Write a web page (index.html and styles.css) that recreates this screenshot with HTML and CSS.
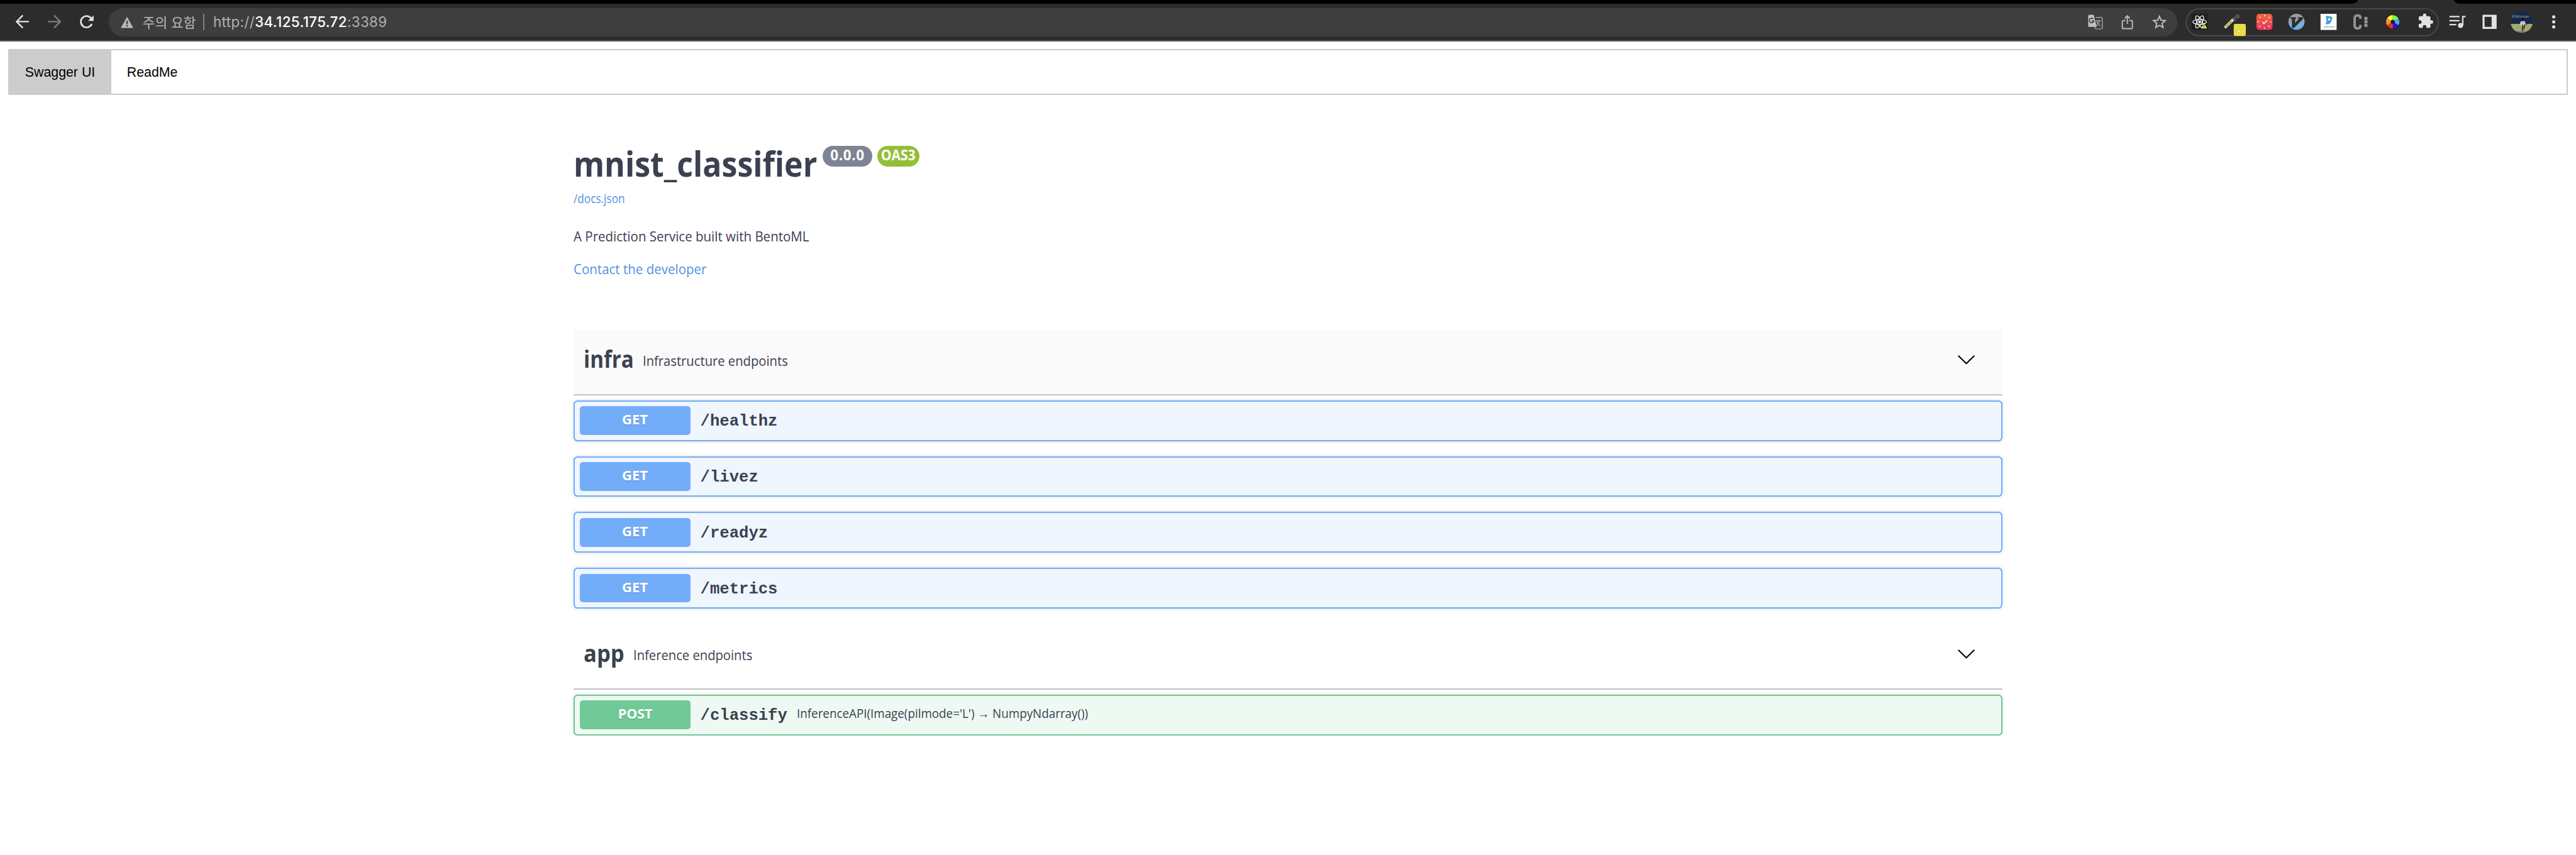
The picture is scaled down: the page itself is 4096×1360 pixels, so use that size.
FILE: index.html
```html
<!DOCTYPE html>
<html lang="ko">
<head>
<meta charset="utf-8">
<title>mnist_classifier</title>
<link rel="stylesheet" href="styles.css">
</head>
<body>
<header class="chrome">
  <div class="tabstrip"><span class="tab-left"></span><span class="tab-right"></span></div>
  <div class="toolbar">
    <svg class="cell" viewBox="-32 -36 64 72" fill="none" stroke="#e4e4e4" stroke-width="3"><path d="M13-.5H-12M.8-13L-11.500-.5.8 12"/></svg>
    <svg class="cell" viewBox="-32 -36 64 72" fill="none" stroke="#7d7d7d" stroke-width="3"><path d="M-13-.5H12M-.8-13L11.500-.5-.8 12"/></svg>
    <svg class="cell" viewBox="-32 -36 64 72"><path d="M9.500-6.500A11.300 11.300 0 1 0 10.500 4" fill="none" stroke="#e4e4e4" stroke-width="3.400"/><path d="M14-13V-2H3z" fill="#e4e4e4"/></svg>
    <div class="address">
      <svg class="warn" viewBox="0 0 26 24"><path d="M12.500 1L25 23H0z" fill="#b4b8bd"/><path d="M11 9h3v6h-3zM11 17h3v3h-3z" fill="#3e3e3e"/></svg>
      <span class="notice">주의 요함</span><i class="rule"></i>
      <span class="url">http://<b>34.125.175.72</b>:3389</span>
      <span class="spacer"></span>
      <svg class="cell" viewBox="-32 -36 64 72"><path d="M1-9H12a2 2 0 0 1 2 2V12a2 2 0 0 1-2 2H1L-2 9" fill="none" stroke="#b6b6b6" stroke-width="1.500"/><path d="M-12-14H-3L3 10H-12a2 2 0 0 1-2-2V-12a2 2 0 0 1 2-2z" fill="#c0c0c0"/><path d="M-3.500-5.500A4.600 4.600 0 1 0-2.800-1.500H-7" fill="none" stroke="#3e3e3e" stroke-width="2"/><path d="M1-2H11M6-4V-2M9-2Q7 5 1 8M3-1Q5 5 10 8" fill="none" stroke="#b6b6b6" stroke-width="1.500"/></svg>
      <svg class="cell" viewBox="-32 -36 64 72" fill="none" stroke="#b9b9b9" stroke-width="2.500"><path d="M-4-2.500H-8a2 2 0 0 0-2 2V11.500a2 2 0 0 0 2 2H8a2 2 0 0 0 2-2V-.5a2 2 0 0 0-2-2H4M0 4V-12M-5-7L0-12 5-7"/></svg>
      <svg class="cell" viewBox="-32 -36 64 72"><path transform="translate(-17.500 -17) scale(1.460)" fill="#c4c4c4" d="M22 9.240l-7.190-.62L12 2 9.190 8.630 2 9.240l5.460 4.730L5.820 21 12 17.270 18.180 21l-1.630-7.030L22 9.240zM12 15.400l-3.760 2.270 1-4.280-3.320-2.880 4.380-.38L12 6.100l1.710 4.040 4.380.38-3.320 2.880 1 4.280L12 15.400z"/></svg>
    </div>
    <div class="extensions">
      <svg class="cell" viewBox="-32 -36 64 72"><rect x="-16" y="-16" width="32" height="32" rx="2" fill="#1f1f1f"/><g fill="none" stroke="#fff" stroke-width="1.500"><ellipse rx="13.500" ry="5"/><ellipse rx="13.500" ry="5" transform="rotate(60)"/><ellipse rx="13.500" ry="5" transform="rotate(120)"/></g><circle r="2.800" fill="#fff"/><path d="M8.500 2L14.500 13H3z" fill="#f3ee6c"/><path d="M8.700 5.500V9M8.700 10.200V11.800" stroke="#222" stroke-width="1.500"/></svg>
      <svg class="cell" viewBox="-32 -36 64 72"><path d="M-12 10L4-6" stroke="#ecebd5" stroke-width="5.500" stroke-linecap="round"/><path d="M-12 10L0-2" stroke="#b8a829" stroke-width="3"/><path d="M2-8L8-2M4-6L12-13" stroke="#555" stroke-width="4"/><circle cx="11.500" cy="-11" r="4.500" fill="#505050"/><rect x="4" y="4" width="24" height="24" rx="3" fill="#eadc48"/><circle cx="14.500" cy="18.500" r="1.400" fill="#fff"/></svg>
      <svg class="cell" viewBox="-32 -36 64 72"><defs><linearGradient id="clock" x2="0" y2="1"><stop stop-color="#ec6a3a"/><stop offset="1" stop-color="#e9335f"/></linearGradient></defs><rect x="-16" y="-16" width="32" height="32" rx="6" fill="url(#clock)"/><circle r="12.500" fill="none" stroke="#fff" stroke-width="3" stroke-dasharray="1.800 8.017" stroke-dashoffset=".9"/><path d="M-4 0L-1 3.500 6-3.500" fill="none" stroke="#fff" stroke-width="1.800"/></svg>
      <svg class="cell" viewBox="-32 -36 64 72"><circle r="16" fill="#74aee0"/><path d="M-16 0a16 16 0 0 1 32 0z" fill="#9b9b9b"/><path d="M-12-9H-1V-6H-3V2L5-6H3V-9H13V-6L-5 12H-9V-6H-12z" fill="#2c2c2c"/></svg>
      <svg class="cell" viewBox="-32 -36 64 72"><path d="M-16-16H16V16H-16z" fill="#fff"/><path d="M-5-9Q-7-12-2-12Q7-10 6-3Q5 4-4 5Q-8 4-4 1Z" fill="#3c9bee"/><path d="M0-11Q8-12 8-5L3-7Z" fill="#35b75b"/><circle cx="1" cy="-5" r="2.500" fill="#f2eee5"/><path d="M-9 10H11" stroke="#aaa" stroke-width="2.500" stroke-dasharray="2 .6"/></svg>
      <svg class="cell" viewBox="-32 -36 64 72"><path d="M-.5-6V-8Q-.5-13-6-13Q-12-13-12-7V7Q-12 13-6 13Q-.5 13-.5 8V6" fill="none" stroke="#929292" stroke-width="5"/><g fill="#929292"><circle cx="10.500" cy="-7" r="3.500"/><circle cx="10.500" r="3.500"/><circle cx="10.500" cy="7" r="3.500"/></g></svg>
      <svg class="cell" viewBox="-32 -36 64 72"><path d="M0 0V-14A14 14 0 0 1 12.120-7z" fill="#76fb4c"/><path d="M0 0L12.120-7A14 14 0 0 1 12.120 7z" fill="#4ba3f8"/><path d="M0 0L12.120 7A14 14 0 0 1 0 14z" fill="#1a10f5"/><path d="M0 0V14A14 14 0 0 1-12.120 7z" fill="#e93223"/><path d="M0 0L-12.120 7A14 14 0 0 1-12.120-7z" fill="#f09337"/><path d="M0 0L-12.120-7A14 14 0 0 1 0-14z" fill="#fdf24e"/><circle r="14" fill="none" stroke="#3b170a" stroke-width="1.300"/><circle r="4" fill="#32130a"/></svg>
      <svg class="cell" viewBox="-32 -36 64 72"><path transform="translate(-14.700 -18) scale(1.360)" fill="#e2e2e2" d="M20.500 11H19V7c0-1.100-.9-2-2-2h-4V3.500a2.500 2.500 0 0 0-5 0V5H4c-1.100 0-1.990.9-1.990 2v3.800H3.500c1.490 0 2.700 1.210 2.700 2.700s-1.210 2.700-2.700 2.700H2V20c0 1.100.9 2 2 2h3.800v-1.500c0-1.490 1.210-2.700 2.700-2.700s2.700 1.210 2.700 2.700V22H17c1.100 0 2-.9 2-2v-4h1.500a2.500 2.500 0 0 0 0-5z"/></svg>
    </div>
    <svg class="cell" viewBox="-32 -36 64 72" stroke="#e2e2e2" fill="none" stroke-width="2.800"><path d="M-16-10.600H4M-16-2.500H4M-16 5.500H-2.500M16-10.600H10.400V7"/><circle cx="6" cy="7" r="5" fill="#e2e2e2" stroke="none"/></svg>
    <svg class="cell" viewBox="-32 -36 64 72"><path d="M-14-14H14V14H-14zM-10-10V10H4V-10z" fill="#e2e2e2" fill-rule="evenodd"/></svg>
    <svg class="cell" viewBox="-32 -36 64 72"><defs><clipPath id="round"><circle r="22"/></clipPath></defs><g clip-path="url(#round)"><path d="M-22-22H22V4H-22z" fill="#18294a"/><path d="M-22 4H22V19H-22z" fill="#a3aa6a"/><path d="M-22 18.500H22V22H-22z" fill="#667c91"/><text x="-19" y="-9" font-family="Liberation Serif, serif" font-size="8.500" textLength="33" fill="#a6b0b8">P.Morgan</text><path d="M1-9L5-8 7-2 2-1-1-5z" fill="#1a171b"/><path d="M-2-1L6-2 8 4 2 9-4 6z" fill="#bfc4dc"/><path d="M2 6V18M6 5L5 12 2 14M7-3L10 6" stroke="#362022" stroke-width="2" fill="none"/></g></svg>
    <svg class="cell" viewBox="-32 -36 64 72" fill="#e2e2e2"><circle cy="-10" r="3.200"/><circle r="3.200"/><circle cy="10" r="3.200"/></svg>
  </div>
</header>

<nav class="tabs"><span class="tab active">Swagger UI</span><span class="tab">ReadMe</span></nav>

<main class="swagger">
  <section class="info">
    <div class="title-row"><h1>mnist_classifier</h1><span class="pill version">0.0.0</span><span class="pill oas"><span>OAS3</span></span></div>
    <div class="docs"><a href="#">/docs.json</a></div>
    <p><span>A Prediction Service built with BentoML</span></p>
    <div class="contact"><a href="#">Contact the developer</a></div>
  </section>

  <section class="group">
    <div class="tag shaded infra"><h2>infra</h2><small>Infrastructure endpoints</small><svg class="chevron" viewBox="0 0 34 18"><path d="M1 1L17 16.500 33 1"/></svg></div>
    <div class="op get"><span class="method"><span>GET</span></span><span class="path">/healthz</span></div>
    <div class="op get"><span class="method"><span>GET</span></span><span class="path">/livez</span></div>
    <div class="op get"><span class="method"><span>GET</span></span><span class="path">/readyz</span></div>
    <div class="op get"><span class="method"><span>GET</span></span><span class="path">/metrics</span></div>
  </section>

  <section class="group">
    <div class="tag app"><h2>app</h2><small>Inference endpoints</small><svg class="chevron" viewBox="0 0 34 18"><path d="M1 1L17 16.500 33 1"/></svg></div>
    <div class="op post"><span class="method"><span>POST</span></span><span class="path">/classify</span><span class="summary">InferenceAPI(Image(pilmode='L') → NumpyNdarray())</span></div>
  </section>
</main>
</body>
</html>
```
FILE: styles.css
```css
* { box-sizing: border-box; }
body { margin: 0; background: #fff; color: #3b4151; font-family: "Open Sans", "Noto Sans", sans-serif; }

.chrome { height: 65.6px; background: #2c2c2c; border-bottom: 2px solid #575353; }
.tabstrip { height: 6.4px; display: flex; justify-content: space-between; }
.tab-left { width: 3749px; background: #000; border-bottom-right-radius: 10px 6.4px; }
.tab-right { width: 194px; background: #000; border-bottom-left-radius: 10px 6.4px; }
.toolbar { height: 57.6px; display: flex; align-items: center; padding: 0 9.6px; }
.cell { width: 51.2px; height: 57.6px; flex: none; display: block; }
.address { flex: 1; height: 44.8px; border-radius: 22.4px; background: #3e3e3e; margin: 0 12.8px 0 9.6px; padding: 0 3.2px 0 19.2px; display: flex; align-items: center; }
.warn { width: 20.8px; height: 19.2px; }
.notice { font: 21.4px/44px "Noto Sans CJK KR", sans-serif; color: #b4b8bd; margin-left: 14px; }
.rule { width: 2px; height: 25.6px; background: #828282; margin: 0 13.5px 0 12px; }
.url { font: 22.4px/44px Inter, sans-serif; letter-spacing: .36px; color: #b0b0b0; }
.url b { font-weight: 500; color: #fff; }
.spacer { flex: 1; }
.extensions { width: 403.2px; height: 44.8px; border-radius: 22.4px; border: 2px solid #484848; display: flex; align-items: center; justify-content: center; margin-right: 3.2px; }

.tabs { margin: 12.8px 12.8px 0; height: 72.8px; border: 2px solid #ccc; display: flex; font: 21.33px/70px "Liberation Sans", Arial, sans-serif; color: #000; white-space: nowrap; }
.tab { padding: 0 25px; }
.active { width: 162px; background: #ccc; }

.swagger { width: 2272px; margin: 0 auto; white-space: nowrap; }
h1, h2, small, p span, .docs a, .contact a, .summary, .oas span, .post .method span { display: inline-block; transform-origin: 0 50%; }
.info { padding-top: 77.8px; height: 372.8px; }
.title-row { display: flex; align-items: flex-start; height: 60px; }
h1 { width: 387px; margin: 0; font-size: 56px; line-height: 60px; font-weight: 700; transform: scaleX(.893); }
.pill { height: 32.8px; margin-top: 3px; border-radius: 16.4px; color: #fff; font-size: 22.4px; line-height: 29px; font-weight: 700; text-align: center; }
.version { width: 79px; background: #7d8492; margin-left: 9px; letter-spacing: .7px; }
.oas { width: 67.4px; background: #93bf38; margin-left: 8px; }
.oas span { transform: scaleX(.94); transform-origin: 50% 50%; }
.docs { margin-top: 12.2px; font-size: 19.2px; line-height: 30px; }
.docs a { transform: scaleX(.896); }
a { color: #5490e0; text-decoration: none; }
p { margin: 28.6px 0 22.3px; font-size: 22px; line-height: 30px; }
p span, .contact a { transform: scaleX(.932); }
.contact { font-size: 22px; line-height: 30px; }

.group { display: flex; flex-direction: column; gap: 24px; }
.group + .group { margin-top: 24px; }
.tag { height: 104.8px; border-bottom: 2px solid #c0c0c8; display: flex; align-items: flex-start; padding: 0 43.6px 0 16px; margin-bottom: -16px; }
.shaded { background: #fafafa; }
h2 { margin: 22.3px 0 0; font-size: 37.5px; line-height: 50px; font-weight: 700; }
.infra h2 { width: 93.7px; transform: scaleX(.885); }
.app h2 { width: 79px; transform: scaleX(.923); }
small { margin: 34.1px 0 0; font-size: 22px; line-height: 30px; transform: scaleX(.918); }
.chevron { width: 27.2px; height: 14.4px; margin: 40.6px 0 0 auto; fill: none; stroke: #000; stroke-width: 2.6; overflow: visible; }
.op { height: 64.8px; flex: none; border: 2px solid #73acf9; border-radius: 6.4px; background: #eff6fe; box-shadow: 0 0 5px rgba(0,0,0,.19); display: flex; align-items: center; padding-left: 7.6px; }
.method { width: 176px; height: 45.6px; border-radius: 5px; background: #73acf9; color: #fff; font-size: 22px; line-height: 41px; font-weight: 700; text-align: center; text-shadow: 0 1.6px 0 rgba(0,0,0,.1); }
.path { margin-left: 16px; padding-top: 4.4px; font: 700 25.6px/40px "Liberation Mono", "Courier New", monospace; }
.post { border-color: #70c996; background: #eef9f3; }
.post .method { background: #70c996; }
.post .method span { transform: scaleX(.975); transform-origin: 50% 50%; }
.summary { font-size: 20px; line-height: 40px; margin-left: 15.2px; padding-bottom: 4px; transform: scaleX(.94); }
```
